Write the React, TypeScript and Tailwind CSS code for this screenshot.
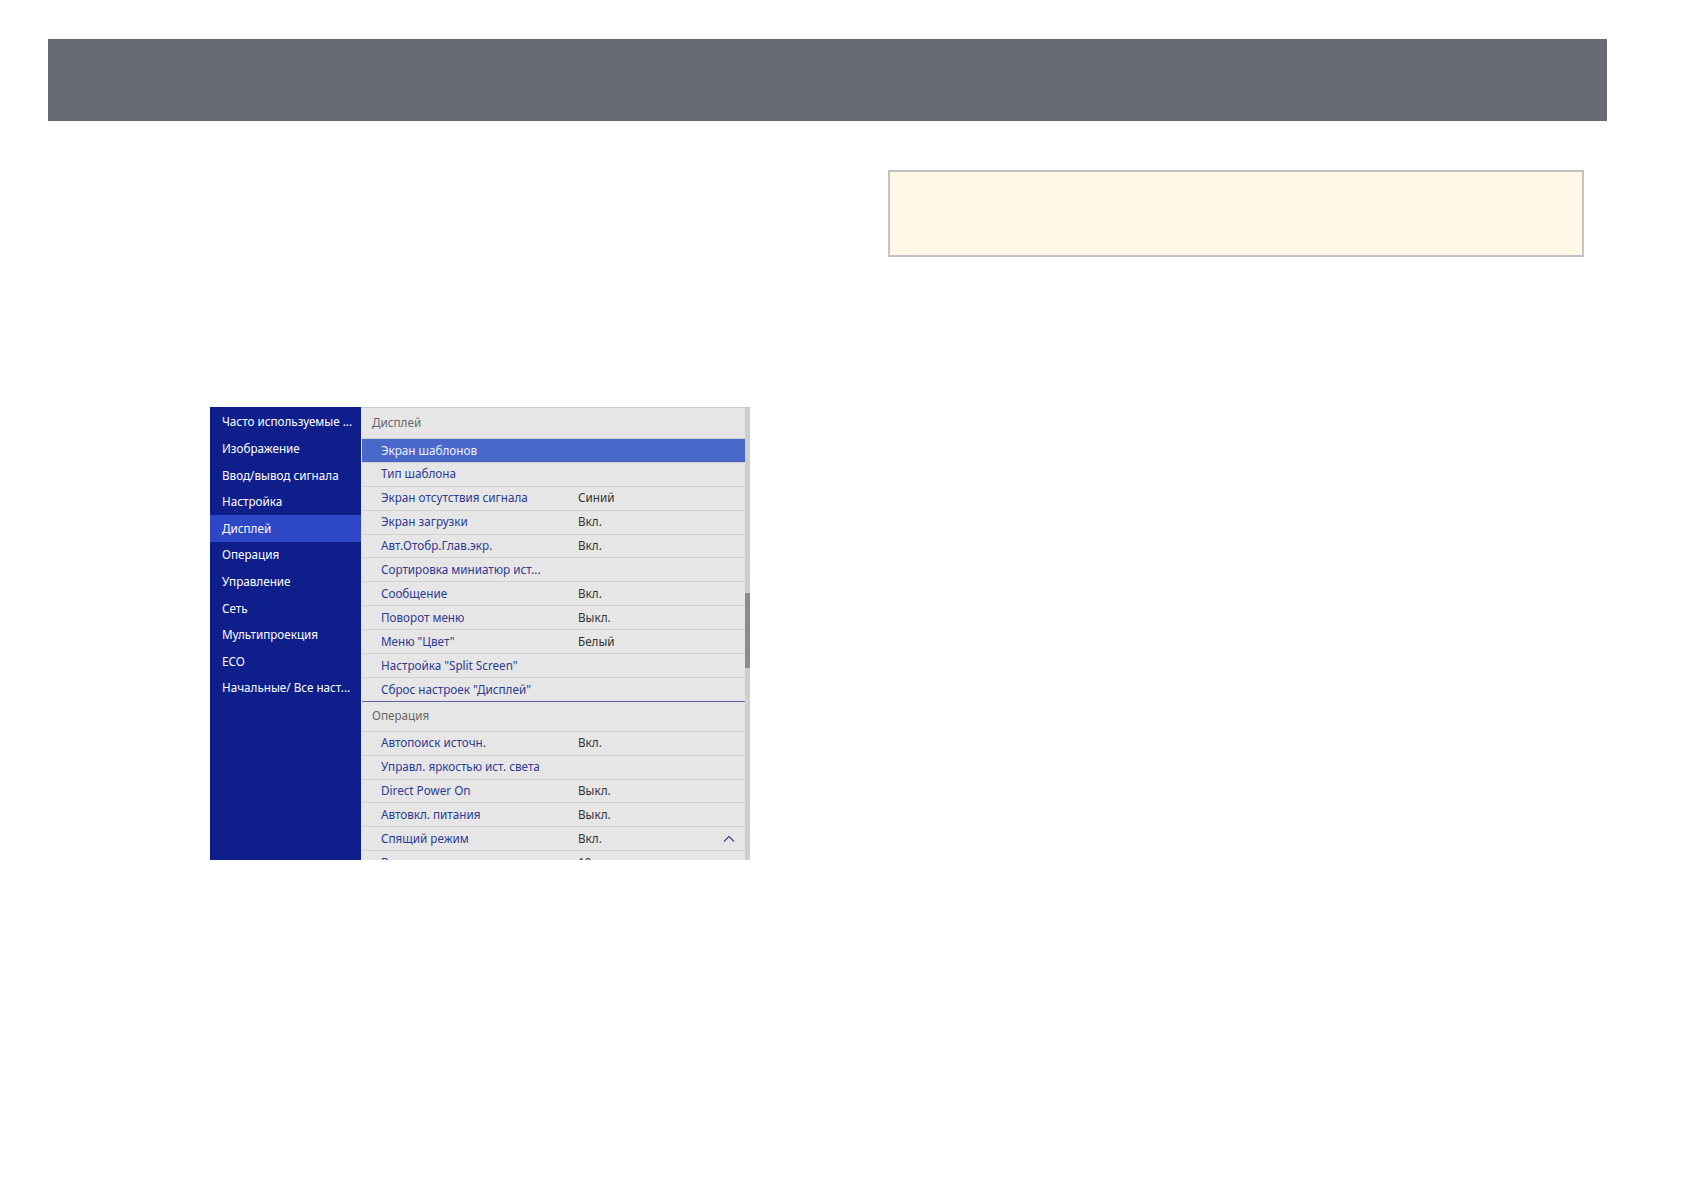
import React from "react";

const side = [
  "Часто используемые ...",
  "Изображение",
  "Ввод/вывод сигнала",
  "Настройка",
  "Дисплей",
  "Операция",
  "Управление",
  "Сеть",
  "Мультипроекция",
  "ECO",
  "Начальные/ Все наст...",
];

const disp: [string, string][] = [
  ["Экран шаблонов", ""],
  ["Тип шаблона", ""],
  ["Экран отсутствия сигнала", "Синий"],
  ["Экран загрузки", "Вкл."],
  ["Авт.Отобр.Глав.экр.", "Вкл."],
  ["Сортировка миниатюр ист...", ""],
  ["Сообщение", "Вкл."],
  ["Поворот меню", "Выкл."],
  ["Меню \"Цвет\"", "Белый"],
  ["Настройка \"Split Screen\"", ""],
  ["Сброс настроек \"Дисплей\"", ""],
];

const oper: [string, string][] = [
  ["Автопоиск источн.", "Вкл."],
  ["Управл. яркостью ист. света", ""],
  ["Direct Power On", "Выкл."],
  ["Автовкл. питания", "Выкл."],
  ["Спящий режим", "Вкл."],
  ["Время спящ. режима", "10 мин."],
];

function Row({ label, value, selected, last, chevron }: { label: string; value: string; selected?: boolean; last?: boolean; chevron?: boolean }) {
  return (
    <div
      className={
        "flex h-[23.9px] shrink-0 items-center border-b whitespace-nowrap " +
        (last ? "border-[#5c63a3] " : "border-[#d2d2d2] ") +
        (selected ? "bg-[#4a68c9] text-white" : "")
      }
    >
      <div className={"w-[216px] pl-[19px] " + (selected ? "text-[#eef1ff]" : "text-[#2c3a92]")}>{label}</div>
      <div className="flex-1 text-[#333333]">{value}</div>
      {chevron && (
        <svg width="12" height="8" viewBox="0 0 12 8" className="mr-[10px]">
          <path d="M1 6.5 L6 1.5 L11 6.5" fill="none" stroke="#4b5290" strokeWidth="1.3" />
        </svg>
      )}
    </div>
  );
}

export default function App() {
  return (
    <div className="w-[1684px] h-[1190px] bg-white overflow-hidden" style={{ fontFamily: '"Noto Sans", "Open Sans", sans-serif' }}>
      <div className="ml-[48px] pt-[39px]">
        <div className="w-[1559px] h-[82px] bg-[#676a73]" />
      </div>
      <div className="flex items-start">
        <div className="ml-[210px] mt-[286px] flex w-[540px] h-[453px] text-[11.7px] leading-none">
          <div className="w-[151px] bg-[#0e1f8b] text-white whitespace-nowrap pt-[2px]">
            {side.map((s, i) => (
              <div key={s} className={"h-[26.6px] flex items-center pl-[12px] " + (i === 4 ? "bg-[#2e47c6]" : "")}>
                {s}
              </div>
            ))}
          </div>
          <div className="flex flex-1 bg-[#e6e6e6] border-t border-[#c9c9c9]">
            <div className="flex flex-col flex-1 overflow-hidden pl-[1px]">
              <div className="h-[31px] shrink-0 flex items-center pl-[10px] text-[#666666] border-b border-[#d2d2d2]">Дисплей</div>
              {disp.map(([l, v], i) => (
                <Row key={l} label={l} value={v} selected={i === 0} last={i === disp.length - 1} />
              ))}
              <div className="h-[30px] shrink-0 flex items-center pl-[10px] text-[#666666] border-b border-[#d2d2d2]">Операция</div>
              {oper.map(([l, v], i) => (
                <Row key={l} label={l} value={v} chevron={i === 4} />
              ))}
            </div>
            <div className="w-[5px] flex flex-col bg-[#cfcfcf]">
              <div className="h-[185px]" />
              <div className="h-[75px] bg-[#8c8c8c]" />
            </div>
          </div>
        </div>
        <div className="ml-[138px] mt-[49px] w-[696px] h-[87px] bg-[#fef7e6] border-2 border-[#c3c3c3]" />
      </div>
    </div>
  );
}
